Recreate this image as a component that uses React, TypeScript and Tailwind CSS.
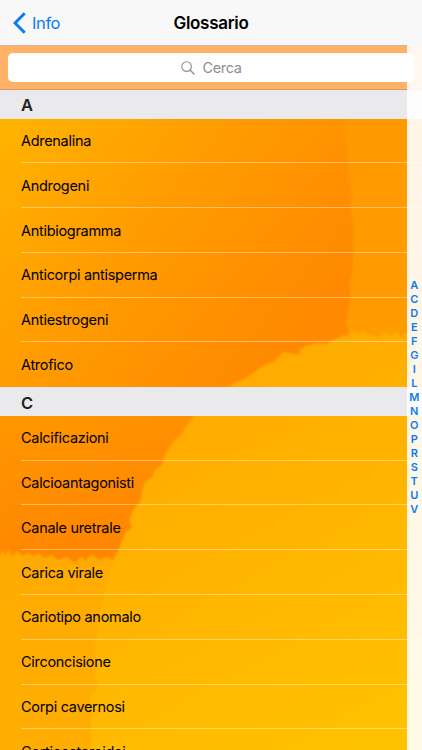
const sections = [
  {
    letter: "A",
    terms: ["Adrenalina", "Androgeni", "Antibiogramma", "Anticorpi antisperma", "Antiestrogeni", "Atrofico"],
  },
  {
    letter: "C",
    terms: [
      "Calcificazioni",
      "Calcioantagonisti",
      "Canale uretrale",
      "Carica virale",
      "Cariotipo anomalo",
      "Circoncisione",
      "Corpi cavernosi",
      "Corticosteroidei",
    ],
  },
];

const indexLetters = "ACDEFGILMNOPRSTUV".split("");

function Backdrop() {
  return (
    <svg className="absolute inset-0" width="422" height="750" viewBox="0 0 422 750" aria-hidden="true">
      <defs>
        <linearGradient id="upper" gradientUnits="userSpaceOnUse" x1="0" y1="110" x2="290" y2="350">
          <stop offset="0" stopColor="#ffb400" />
          <stop offset="0.5" stopColor="#ff9b00" />
          <stop offset="1" stopColor="#ff8900" />
        </linearGradient>
        <linearGradient id="middle" gradientUnits="userSpaceOnUse" x1="0" y1="385" x2="50" y2="560">
          <stop offset="0" stopColor="#ff9a00" />
          <stop offset="1" stopColor="#ff8600" />
        </linearGradient>
        <linearGradient id="right" gradientUnits="userSpaceOnUse" x1="350" y1="120" x2="422" y2="330">
          <stop offset="0" stopColor="#ff9900" />
          <stop offset="1" stopColor="#ff9c00" />
        </linearGradient>
        <linearGradient id="lower" gradientUnits="userSpaceOnUse" x1="180" y1="370" x2="380" y2="740">
          <stop offset="0" stopColor="#ffa900" />
          <stop offset="1" stopColor="#ffc200" />
        </linearGradient>
        <linearGradient id="corner" gradientUnits="userSpaceOnUse" x1="0" y1="555" x2="100" y2="750">
          <stop offset="0" stopColor="#ffaa00" />
          <stop offset="1" stopColor="#ffae00" />
        </linearGradient>
        <filter id="soften">
          <feGaussianBlur stdDeviation="1.3" />
        </filter>
      </defs>
      <rect width="422" height="400" fill="url(#upper)" />
      <rect y="400" width="422" height="350" fill="url(#middle)" />
      <g filter="url(#soften)">
        <path
          d="M345 80L346 140L349 160L348 178L352 195L351 212L354 224L353 260L352 276L349 282L351 298L348 312L346 322L349 332L345 350L440 350L440 80Z"
          fill="url(#right)"
        />
        <path
          d="M-10 550L0 556L2 550L5 555L9 550L12 556L17 551L22 556L28 553L34 556L39 553L45 558L52 555L58 560L67 557L75 563L82 556L85 561L92 554L99 560L106 557L112 559L125 560L125 770L-10 770Z"
          fill="url(#corner)"
        />
        <path
          d="M440 330L422 334L405 333L401 338L396 331L390 337L385 332L379 337L373 336L367 334L363 331L357 334L352 331L348 336L343 335L338 338L331 341L326 344L317 343L310 345L305 346L301 350L299 348L300 354L292 354L284 352L278 357L276 360L271 363L266 364L262 367L257 370L249 376L243 380L236 382L230 386L220 389L208 397L199 407L192 418L186 426L182 434L176 439L170 447L164 457L163 464L155 470L152 477L145 482L142 492L140 502L133 510L129 520L132 527L126 532L121 544L115 557L109 575L104 593L99 620L95 652L94 673L98 686L91 696L92 770L440 770Z"
          fill="url(#lower)"
        />
      </g>
    </svg>
  );
}

function SectionHeader({ letter }: { letter: string }) {
  return (
    <div className="flex h-[28.5px] items-center bg-[#eaeaec] pl-[21px] pt-[3px] text-[16.5px] font-semibold text-[#222]">
      {letter}
    </div>
  );
}

export default function App() {
  return (
    <div className="relative h-[750px] w-[422px] overflow-hidden font-['Inter','Liberation_Sans',sans-serif] text-black">
      <Backdrop />

      <div className="relative flex flex-col">
        {/* Navigation bar */}
        <header className="grid h-[45.5px] grid-cols-3 items-center border-b border-[#c9b8aa] bg-[#f8f8f8] pt-[2px]">
          <button className="flex items-center gap-[6px] pl-[13px] text-[16.5px] tracking-[-0.4px] text-[#0b7bf7]">
            <svg width="13" height="22" viewBox="0 0 13 22" fill="none" stroke="currentColor" strokeWidth="3">
              <path d="M11.7 1.2L2 11L11.7 20.8" />
            </svg>
            Info
          </button>
          <h1 className="text-center text-[17px] font-semibold tracking-[-0.3px]">Glossario</h1>
        </header>

        {/* Search bar */}
        <div className="h-[44.5px] border-b border-[#d69a65] bg-[#ffb266] px-[8.3px] pt-[7.5px]">
          <div className="flex h-[29px] items-center justify-center gap-2 rounded-[5px] bg-white text-[14.5px] tracking-[-0.4px] text-[#8e8e93]">
            <svg width="14" height="14" viewBox="0 0 14 14" fill="none" stroke="currentColor" strokeWidth="1.1">
              <circle cx="5.6" cy="5.6" r="4.8" />
              <path d="M9.1 9.1L13.4 13.4" strokeWidth="1.4" />
            </svg>
            Cerca
          </div>
        </div>

        {/* Terms */}
        {sections.map((section) => (
          <section key={section.letter}>
            <SectionHeader letter={section.letter} />
            <ul className="pl-[21px]">
              {section.terms.map((term) => (
                <li
                  key={term}
                  className="flex h-[44.8px] items-center border-b border-white/40 pt-px text-[14.5px] tracking-[-0.3px] last:border-transparent"
                >
                  {term}
                </li>
              ))}
            </ul>
          </section>
        ))}
      </div>

      {/* Alphabet index */}
      <nav className="absolute bottom-0 right-0 top-[45px] flex w-[15.5px] flex-col items-center bg-white/90 pt-[233px] text-[11px] font-semibold text-[#0b7bf7]">
        {indexLetters.map((letter) => (
          <span key={letter} className="h-[14px] leading-[14px]">
            {letter}
          </span>
        ))}
      </nav>
    </div>
  );
}
